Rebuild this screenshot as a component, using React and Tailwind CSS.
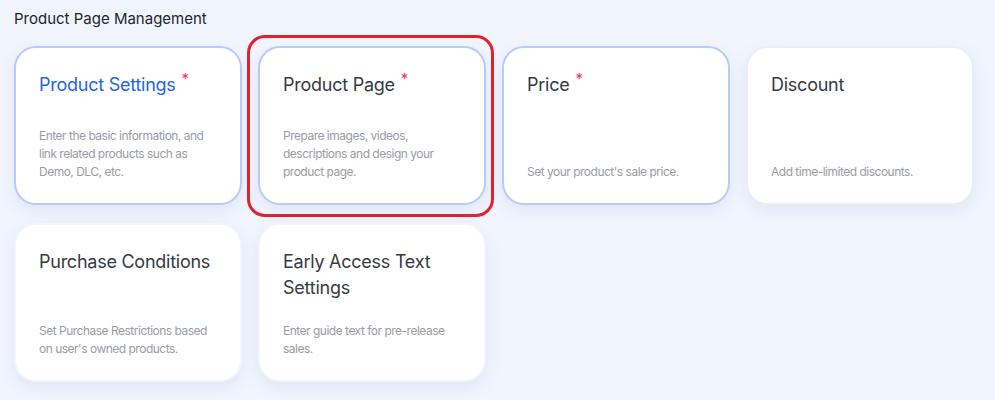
import React from "react";

const cards = [
  {
    title: "Product Settings",
    desc: "Enter the basic information, and link related products such as Demo, DLC, etc.",
    required: true,
    active: true,
    outlined: true,
  },
  {
    title: "Product Page",
    desc: "Prepare images, videos, descriptions and design your product page.",
    required: true,
    outlined: true,
    highlighted: true,
  },
  {
    title: "Price",
    desc: "Set your product's sale price.",
    required: true,
    outlined: true,
  },
  {
    title: "Discount",
    desc: "Add time-limited discounts.",
    bordered: true,
  },
  {
    title: "Purchase Conditions",
    desc: "Set Purchase Restrictions based on user's owned products.",
  },
  {
    title: "Early Access Text Settings",
    desc: "Enter guide text for pre-release sales.",
  },
];

function Card({ card }) {
  const border = card.outlined
    ? "border-[#b6cbfb]"
    : card.bordered
    ? "border-[#eaeef7]"
    : "border-[#f3f5fb]";

  return (
    <div className="relative">
      {card.highlighted && (
        <div className="absolute -left-[11px] -top-[11px] -right-[8px] -bottom-[12px] rounded-[18px] border-[3px] border-[#e6202c] pointer-events-none" />
      )}
      <div
        className={`flex h-full flex-col justify-between rounded-[22px] border-2 bg-white pl-[23px] pr-[22px] pt-[24px] pb-[22px] shadow-[0_6px_16px_rgba(120,140,200,0.14)] ${border}`}
      >
        <h3
          className={`text-[18px] font-normal leading-[26px] tracking-[-0.25px] ${
            card.active ? "text-[#2563eb]" : "text-[#363a42]"
          }`}
        >
          {card.title}
          {card.required && (
            <span className="relative -top-[7px] ml-[6px] text-[15px] text-[#ef3a45]">*</span>
          )}
        </h3>
        <p className="text-[12px] leading-[18px] tracking-[-0.5px] text-[#9a9ca6]">{card.desc}</p>
      </div>
    </div>
  );
}

export default function App() {
  return (
    <div
      className="min-h-screen bg-[#f1f5fd] px-[14px] pt-[8px]"
      style={{ fontFamily: "Inter, 'Noto Sans', sans-serif" }}
    >
      <h2 className="text-[15px] leading-[22px] text-[#22252b]">Product Page Management</h2>
      <div className="mt-4 grid w-[960px] grid-cols-4 gap-x-4 gap-y-[18px] [grid-auto-rows:159px]">
        {cards.map((c) => (
          <Card key={c.title} card={c} />
        ))}
      </div>
    </div>
  );
}
